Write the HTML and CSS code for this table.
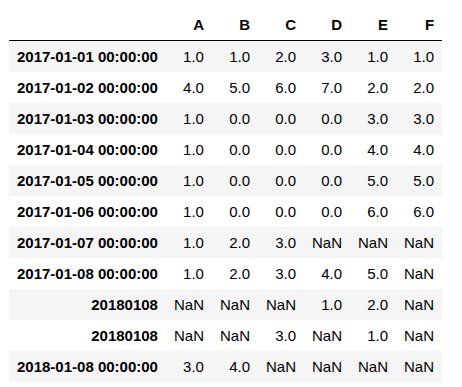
FILE: index.html
```html
<!DOCTYPE html>
<html>
<head>
<meta charset="utf-8">
<link rel="stylesheet" href="styles.css">
</head>
<body>
<div class="output">
<table class="dataframe">
  <thead>
    <tr><th></th><th>A</th><th>B</th><th>C</th><th>D</th><th>E</th><th>F</th></tr>
  </thead>
  <tbody>
    <tr><th>2017-01-01 00:00:00</th><td>1.0</td><td>1.0</td><td>2.0</td><td>3.0</td><td>1.0</td><td>1.0</td></tr>
    <tr><th>2017-01-02 00:00:00</th><td>4.0</td><td>5.0</td><td>6.0</td><td>7.0</td><td>2.0</td><td>2.0</td></tr>
    <tr><th>2017-01-03 00:00:00</th><td>1.0</td><td>0.0</td><td>0.0</td><td>0.0</td><td>3.0</td><td>3.0</td></tr>
    <tr><th>2017-01-04 00:00:00</th><td>1.0</td><td>0.0</td><td>0.0</td><td>0.0</td><td>4.0</td><td>4.0</td></tr>
    <tr><th>2017-01-05 00:00:00</th><td>1.0</td><td>0.0</td><td>0.0</td><td>0.0</td><td>5.0</td><td>5.0</td></tr>
    <tr><th>2017-01-06 00:00:00</th><td>1.0</td><td>0.0</td><td>0.0</td><td>0.0</td><td>6.0</td><td>6.0</td></tr>
    <tr><th>2017-01-07 00:00:00</th><td>1.0</td><td>2.0</td><td>3.0</td><td>NaN</td><td>NaN</td><td>NaN</td></tr>
    <tr><th>2017-01-08 00:00:00</th><td>1.0</td><td>2.0</td><td>3.0</td><td>4.0</td><td>5.0</td><td>NaN</td></tr>
    <tr><th>20180108</th><td>NaN</td><td>NaN</td><td>NaN</td><td>1.0</td><td>2.0</td><td>NaN</td></tr>
    <tr><th>20180108</th><td>NaN</td><td>NaN</td><td>3.0</td><td>NaN</td><td>1.0</td><td>NaN</td></tr>
    <tr><th>2018-01-08 00:00:00</th><td>3.0</td><td>4.0</td><td>NaN</td><td>NaN</td><td>NaN</td><td>NaN</td></tr>
  </tbody>
</table>
</div>
</body>
</html>
```

FILE: styles.css
```css
html, body {
  margin: 0;
  padding: 0;
  background: #fff;
}
.output {
  padding: 9px;
}
.dataframe {
  border-collapse: collapse;
  border: none;
  font-family: "Liberation Sans", Arial, sans-serif;
  font-size: 15px;
  color: #000;
}
.dataframe th,
.dataframe td {
  text-align: right;
  vertical-align: middle;
  padding: 7px 8px;
  line-height: 17px;
  height: 17px;
  white-space: nowrap;
  border: none;
}
.dataframe th {
  font-weight: bold;
}
.dataframe thead {
  border-bottom: 1px solid #000;
}
.dataframe thead th {
  height: 16px;
}
.dataframe tbody tr:nth-child(odd) {
  background: #f5f5f5;
}
```
